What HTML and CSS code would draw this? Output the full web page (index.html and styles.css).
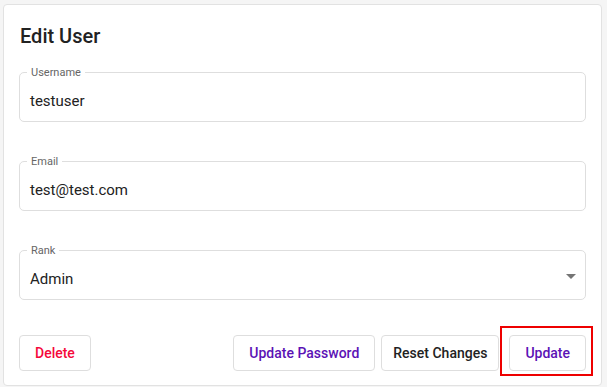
FILE: index.html
```html
<!DOCTYPE html>
<html lang="en">
<head>
    <meta charset="UTF-8">
    <meta name="viewport" content="width=device-width, initial-scale=1.0">
    <title>Edit User</title>
    <link rel="stylesheet" href="styles.css">
</head>
<body>
    <div class="card">
        <h2 class="card-title">Edit User</h2>

        <!-- Fields -->
        <div class="fields">
            <div class="field">
                <span class="field-label">Username</span>
                <div class="field-value">testuser</div>
            </div>
            <div class="field">
                <span class="field-label">Email</span>
                <div class="field-value">test@test.com</div>
            </div>
            <div class="field select">
                <span class="field-label">Rank</span>
                <div class="field-value">Admin</div>
                <svg class="arrow" width="10" height="5" viewBox="0 0 10 5"><path d="M0 0h10L5 5z" fill="#757575"/></svg>
            </div>
        </div>

        <!-- Actions -->
        <div class="actions">
            <button class="btn danger">Delete</button>
            <div class="actions-right">
                <button class="btn primary">Update Password</button>
                <button class="btn reset">Reset Changes</button>
                <div class="highlight">
                    <button class="btn primary">Update</button>
                </div>
            </div>
        </div>
    </div>
</body>
</html>
```

FILE: styles.css
```css
* {
    margin: 0;
    padding: 0;
    box-sizing: border-box;
}

body {
    font-family: Roboto, "Liberation Sans", sans-serif;
    background: #f5f5f5;
    padding: 4px 5px 1px 3px;
    height: 387px;
}

.card {
    background: #fff;
    border: 1px solid #e2e2e2;
    border-radius: 4px;
    padding: 17px 15px 14px 15px;
}

.card-title {
    font-size: 20px;
    font-weight: 500;
    line-height: 28px;
    color: #222;
    margin-left: 1px;
}

/* Fields */
.fields {
    display: flex;
    flex-direction: column;
    gap: 39px;
    margin-top: 22px;
}

.field {
    position: relative;
    border: 1px solid #dedede;
    border-radius: 5px;
    padding: 0 12px 0 10px;
    height: 50px;
    display: flex;
    align-items: center;
}

.field-label {
    position: absolute;
    top: -6px;
    left: 7px;
    font-size: 11px;
    line-height: 11px;
    color: #666;
    padding: 0 4px;
    background: #fff;
}

.field-value {
    flex: 1;
    font-size: 15px;
    color: #222;
    padding-top: 7px;
}

.field.select .arrow {
    margin-right: -3px;
    margin-top: 2px;
}

/* Actions */
.actions {
    display: flex;
    justify-content: space-between;
    margin-top: 35px;
}

.actions-right {
    display: flex;
    gap: 6px;
}

.btn {
    height: 36px;
    padding: 0 15px;
    border: 1px solid #dedede;
    border-radius: 4px;
    background: #fff;
    font-family: inherit;
    font-size: 14px;
    font-weight: 500;
    color: #222;
}

.btn.reset {
    padding: 0 11px;
}

.btn.danger {
    color: #f5083a;
}

.btn.primary {
    color: #5b12b5;
}

.highlight {
    position: relative;
    margin-left: 4px;
}

.highlight::after {
    content: "";
    position: absolute;
    top: -9px;
    left: -9px;
    right: -7px;
    bottom: -5px;
    border: 2px solid #ee0000;
}
```
